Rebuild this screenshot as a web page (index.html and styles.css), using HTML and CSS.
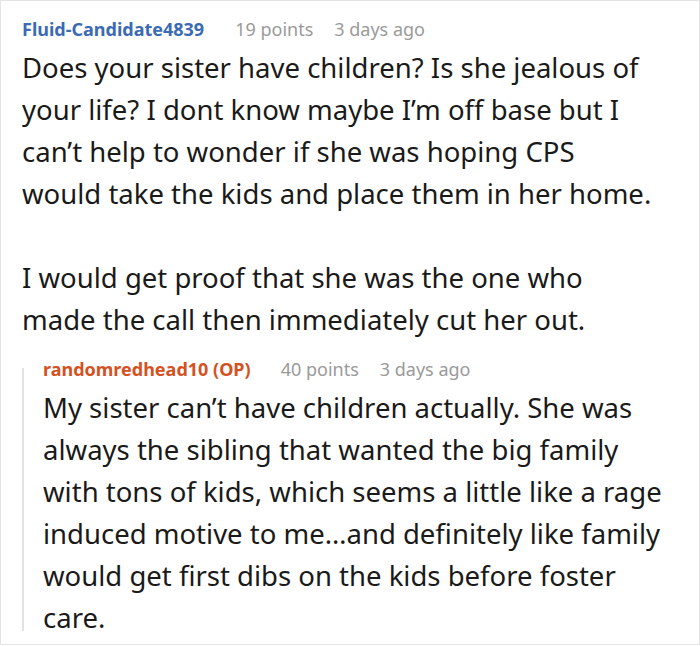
FILE: index.html
```html
<!DOCTYPE html>
<html lang="en">
<head>
<meta charset="utf-8">
<link rel="stylesheet" href="styles.css">
</head>
<body>
<div class="frame">
  <div class="comment">
    <div class="meta">
      <span class="author">Fluid-Candidate4839</span>
      <span class="points">19 points</span>
      <span class="time">3 days ago</span>
    </div>
    <div class="body main">
      <p>Does your sister have children? Is she jealous of your life? I dont know maybe I’m off base but I can’t help to wonder if she was hoping CPS would take the kids and place them in her home.</p>
      <p>I would get proof that she was the one who made the call then immediately cut her out.</p>
    </div>
    <div class="reply">
      <div class="meta">
        <span class="author op">randomredhead10 (OP)</span>
        <span class="points">40 points</span>
        <span class="time">3 days ago</span>
      </div>
      <div class="body">
        <p>My sister can’t have children actually. She was always the sibling that wanted the big family with tons of kids, which seems a little like a rage induced motive to me…and definitely like family would get first dibs on the kids before foster care.</p>
      </div>
    </div>
  </div>
</div>
</body>
</html>
```

FILE: styles.css
```css
html, body {
  margin: 0;
  padding: 0;
  background: #fff;
}
.frame {
  box-sizing: border-box;
  width: 700px;
  height: 645px;
  border: 1px solid #e4e4e4;
  padding: 16px 20px 0 21px;
  overflow: hidden;
  font-family: "Noto Sans", sans-serif;
  color: #1a1a1a;
}
.meta {
  display: flex;
  align-items: baseline;
  font-size: 18px;
  line-height: 24px;
  color: #9a9a9a;
}
.author {
  font-weight: 700;
  color: #3a6bb4;
  margin-right: 31px;
}
.author.op {
  color: #d4521f;
  margin-right: 30px;
}
.points {
  margin-right: 21px;
}
.body {
  margin-top: 6px;
  font-size: 27.5px;
  line-height: 42px;
}
.body.main {
  max-width: 637px;
}
.body p {
  margin: 0 0 42px 0;
}
.body p:last-child {
  margin-bottom: 0;
}
.reply {
  position: relative;
  margin-top: 16px;
  padding-left: 21px;
}
.reply::before {
  content: "";
  position: absolute;
  left: 0;
  top: 11px;
  bottom: 8px;
  width: 2px;
  background: #e2e2e2;
}
```
